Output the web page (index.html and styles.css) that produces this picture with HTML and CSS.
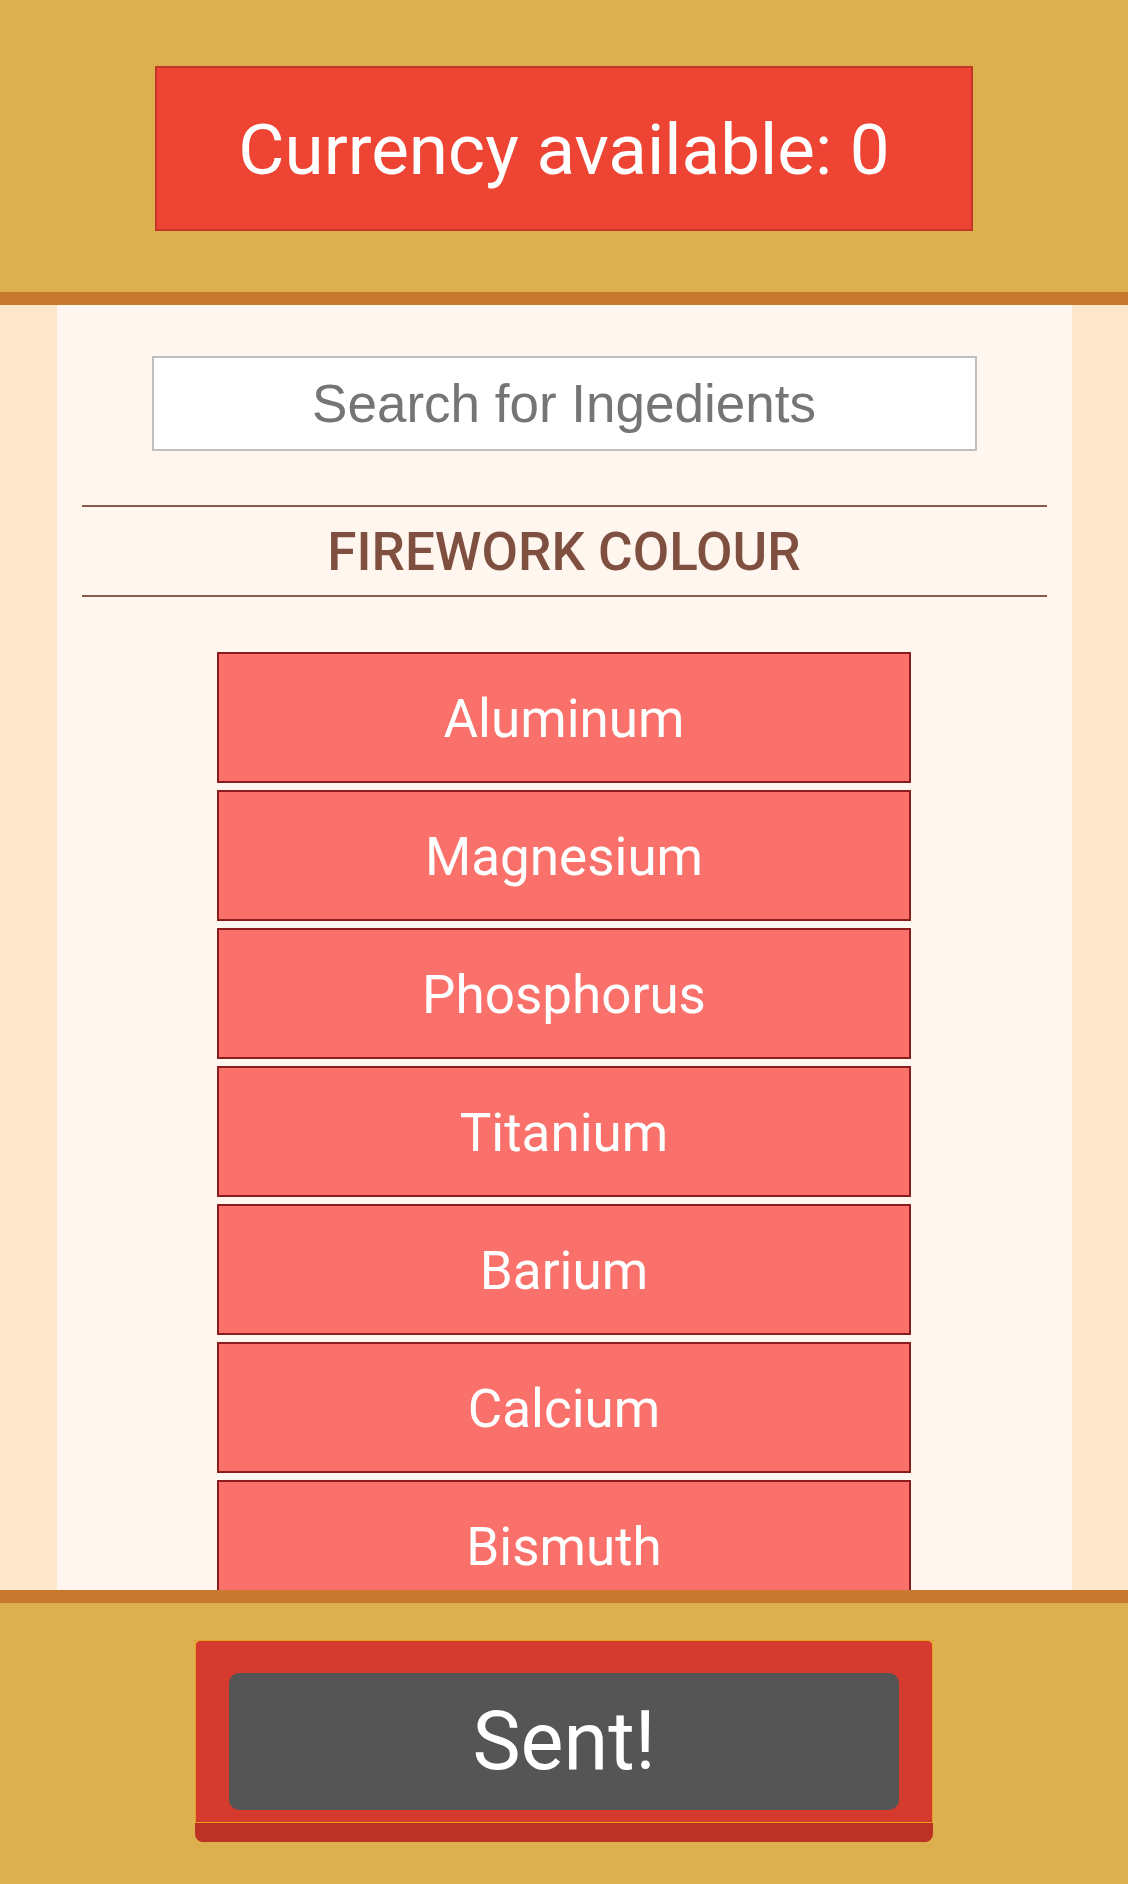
FILE: index.html
```html
<!DOCTYPE html>
<html lang="en">
<head>
<meta charset="utf-8">
<title>Firework Shop</title>
<link rel="stylesheet" href="styles.css">
</head>
<body>
<div class="app">
  <header class="top">
    <div class="currency">Currency available: 0</div>
  </header>
  <main class="shop">
    <div class="panel">
      <input class="search" type="text" placeholder="Search for Ingedients">
      <h2 class="category">FIREWORK COLOUR</h2>
      <ul class="items">
        <li class="item">Aluminum</li>
        <li class="item">Magnesium</li>
        <li class="item">Phosphorus</li>
        <li class="item">Titanium</li>
        <li class="item">Barium</li>
        <li class="item">Calcium</li>
        <li class="item">Bismuth</li>
      </ul>
    </div>
  </main>
  <footer class="bottom">
    <div class="send">
      <button class="send-btn" type="button">Sent!</button>
    </div>
  </footer>
</div>
</body>
</html>
```

FILE: styles.css
```css
html, body {
  margin: 0;
  padding: 0;
}

body {
  background: #fee8cc;
  font-family: Roboto, "Liberation Sans", sans-serif;
}

.app {
  display: flex;
  flex-direction: column;
  height: 100vh;
}

.top {
  flex: none;
  height: 226px;
  padding-top: 66px;
  background: #dcb04e;
  border-bottom: 13px solid #c9782f;
  display: flex;
  justify-content: center;
  align-items: flex-start;
}

.currency {
  width: 818px;
  height: 165px;
  box-sizing: border-box;
  border: 2px solid #c3372a;
  background: #ee4433;
  color: #ffffff;
  font-size: 71px;
  display: flex;
  align-items: center;
  justify-content: center;
  padding-top: 2px;
}

.shop {
  flex: 1;
  min-height: 0;
  overflow: hidden;
}

.panel {
  width: 1015px;
  min-height: 100%;
  margin: 0 auto;
  background: #fff6ef;
  box-sizing: border-box;
  padding-top: 51px;
  display: flex;
  flex-direction: column;
  align-items: center;
}

.search {
  width: 825px;
  height: 95px;
  box-sizing: border-box;
  border: 2px solid #bfbfbf;
  background: #ffffff;
  font-family: "Liberation Sans", Arial, sans-serif;
  font-size: 53px;
  color: #333333;
  text-align: center;
  padding: 0;
  margin: 0;
  outline: none;
}

.search::placeholder {
  color: #757575;
}

.category {
  align-self: stretch;
  margin: 54px 25px 0;
  padding-top: 3px;
  border-top: 2px solid #8a5a4b;
  border-bottom: 2px solid #8a5a4b;
  line-height: 85px;
  font-size: 53px;
  font-weight: 500;
  color: #7f4f40;
  text-align: center;
}

.items {
  list-style: none;
  margin: 55px 0 0;
  padding: 0;
  width: 694px;
}

.item {
  height: 131px;
  box-sizing: border-box;
  border: 2px solid #8b1d1d;
  background: #fa716b;
  color: #ffffff;
  font-size: 53px;
  display: flex;
  align-items: center;
  justify-content: center;
  padding-top: 2px;
  margin-bottom: 7px;
}

.bottom {
  flex: none;
  height: 244px;
  padding-top: 37px;
  background: #dcb04e;
  border-top: 13px solid #c9782f;
  display: flex;
  justify-content: center;
  align-items: flex-start;
}

.send {
  position: relative;
  width: 738px;
  height: 183px;
  box-sizing: border-box;
  padding: 33px 34px 13px;
  background: #d43b2e;
  border-radius: 8px;
  box-shadow: 0 19px 0 #bc3226;
}

.send::after {
  content: "";
  position: absolute;
  inset: 0;
  border: 1px solid #e9a020;
  pointer-events: none;
}

.send-btn {
  display: block;
  width: 100%;
  height: 100%;
  margin: 0;
  padding: 0;
  border: none;
  border-radius: 10px;
  background: #555555;
  color: #ffffff;
  font-family: Roboto, "Liberation Sans", sans-serif;
  font-size: 81px;
  cursor: pointer;
}
```
